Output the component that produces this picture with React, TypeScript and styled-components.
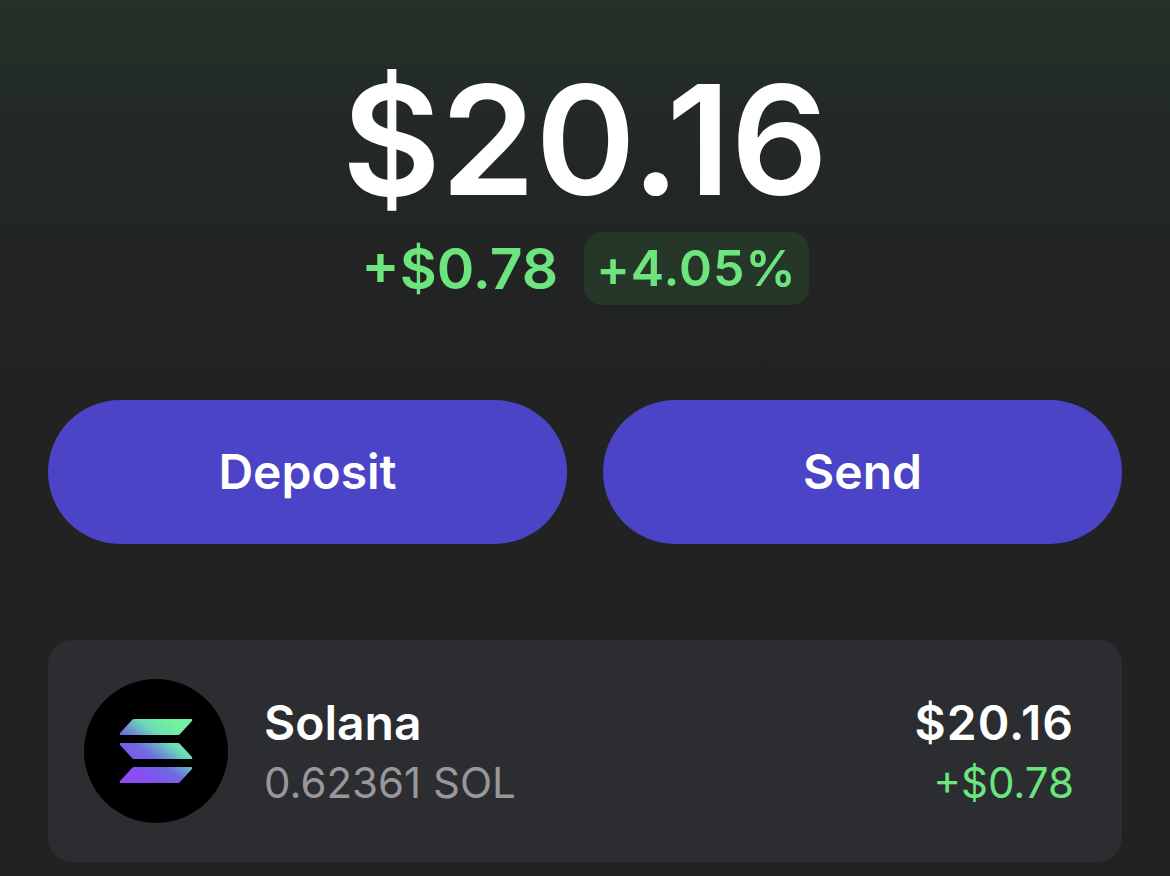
import React from 'react';
import styled, { createGlobalStyle } from 'styled-components';

const GlobalStyle = createGlobalStyle`
  * { box-sizing: border-box; }
  body {
    margin: 0;
    background: #222222;
    color: #ffffff;
    font-family: Inter, "Liberation Sans", sans-serif;
  }
`;

const Page = styled.main`
  min-height: 100vh;
  padding: 60px 48px 14px;
  background: linear-gradient(#263028 0, #232b26 90px, #222624 210px, #222222 380px);
`;

const Summary = styled.header`
  display: flex;
  flex-direction: column;
  align-items: center;
`;

const Balance = styled.h1`
  margin: 0;
  font-size: 152px;
  line-height: 160px;
  font-weight: 600;
`;

const ChangeRow = styled.div`
  display: flex;
  align-items: center;
  gap: 26px;
  margin-top: 12px;
  color: #6ce57e;
  font-weight: 600;
`;

const ChangeAmount = styled.span`
  font-size: 57px;
  line-height: 73px;
`;

const ChangeBadge = styled.span`
  padding: 0 12px;
  border-radius: 18px;
  background: #26372a;
  font-size: 50px;
  line-height: 73px;
  letter-spacing: 1px;
`;

const Actions = styled.div`
  display: grid;
  grid-template-columns: 1fr 1fr;
  gap: 36px;
  margin-top: 95px;
`;

const ActionButton = styled.button`
  height: 144px;
  padding: 0 0 2px;
  border: 0;
  border-radius: 72px;
  background: #4b44c6;
  color: #ffffff;
  font: inherit;
  font-size: 48px;
  font-weight: 600;
  cursor: pointer;
`;

const TokenCard = styled.section`
  display: flex;
  align-items: center;
  gap: 36px;
  margin-top: 96px;
  padding: 39px 48px 39px 36px;
  border-radius: 24px;
  background: #2c2d31;
`;

const TokenIcon = styled.div`
  display: flex;
  align-items: center;
  justify-content: center;
  width: 144px;
  height: 144px;
  border-radius: 50%;
  background: #000000;
`;

const Details = styled.div<{ $end?: boolean }>`
  display: flex;
  flex-direction: column;
  align-items: ${(p) => (p.$end ? 'flex-end' : 'flex-start')};
  margin-left: ${(p) => (p.$end ? 'auto' : '0')};
  padding-top: 4px;
`;

const Primary = styled.span<{ $numeric?: boolean }>`
  font-size: 48px;
  line-height: 60px;
  font-weight: 600;
  letter-spacing: ${(p) => (p.$numeric ? '1px' : 'normal')};
`;

const Secondary = styled.span<{ $gain?: boolean }>`
  font-size: 42px;
  line-height: 60px;
  color: ${(p) => (p.$gain ? '#6ce57e' : '#98989b')};
`;

function SolanaLogo() {
  return (
    <svg width="74" height="66" viewBox="0 0 74 66" aria-hidden="true">
      <defs>
        <linearGradient id="sol" gradientUnits="userSpaceOnUse" x1="10" y1="68" x2="64" y2="-2">
          <stop offset="0.05" stopColor="#8f4af5" />
          <stop offset="0.22" stopColor="#8450ef" />
          <stop offset="0.42" stopColor="#6f6be0" />
          <stop offset="0.53" stopColor="#6a9ccf" />
          <stop offset="0.66" stopColor="#6cdcb6" />
          <stop offset="0.88" stopColor="#70f29e" />
        </linearGradient>
      </defs>
      <g fill="url(#sol)">
        <path d="M15 1H72Q74 1 73 3L61 16Q60 17 59 17H2Q0 17 1 15L13 2Q14 1 15 1Z" />
        <path d="M2 25H59Q60 25 61 26L73 39Q74 41 72 41H15Q14 41 13 40L1 27Q0 25 2 25Z" />
        <path d="M15 49H72Q74 49 73 51L61 64Q60 65 59 65H2Q0 65 1 63L13 50Q14 49 15 49Z" />
      </g>
    </svg>
  );
}

export default function App() {
  return (
    <>
      <GlobalStyle />
      <Page>
        <Summary>
          <Balance>$20.16</Balance>
          <ChangeRow>
            <ChangeAmount>+$0.78</ChangeAmount>
            <ChangeBadge>+4.05%</ChangeBadge>
          </ChangeRow>
        </Summary>
        <Actions>
          <ActionButton type="button">Deposit</ActionButton>
          <ActionButton type="button">Send</ActionButton>
        </Actions>
        <TokenCard>
          <TokenIcon>
            <SolanaLogo />
          </TokenIcon>
          <Details>
            <Primary>Solana</Primary>
            <Secondary>0.62361 SOL</Secondary>
          </Details>
          <Details $end>
            <Primary $numeric>$20.16</Primary>
            <Secondary $gain>+$0.78</Secondary>
          </Details>
        </TokenCard>
      </Page>
    </>
  );
}
